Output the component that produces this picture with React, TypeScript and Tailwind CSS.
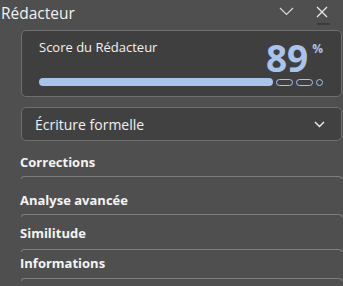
export default function App() {
  const sections = [
    { label: "Corrections", h: "h-[38px]", pt: "pt-[12px]" },
    { label: "Analyse avancée", h: "h-[38px]", pt: "pt-[12px]" },
    { label: "Similitude", h: "h-[35px]", pt: "pt-[7px]" },
    { label: "Informations", h: "h-[29px]", pt: "pt-[2px]" },
  ]

  return (
    <div className="w-[343px] h-[286px] overflow-hidden bg-[#4f4f4f] text-[#f2f2f2] font-['Open_Sans',sans-serif]">
      {/* titre */}
      <div className="flex items-center h-[30px] pl-[1px] pr-[13px]">
        <span className="text-[15.5px] leading-none -mt-[2px]">Rédacteur</span>
        <div className="ml-auto flex items-start gap-[20px]">
          <svg width="15" height="9" viewBox="0 0 15 9" className="mt-[1px]">
            <path d="M1 1 L7.5 7.5 L14 1" fill="none" stroke="#d8d8d8" strokeWidth="1.2" />
          </svg>
          <div className="flex flex-col items-center">
            <svg width="12" height="12" viewBox="0 0 12 12">
              <path d="M1 1 L11 11 M11 1 L1 11" fill="none" stroke="#e8e8e8" strokeWidth="1.3" />
            </svg>
            <div className="w-[13px] h-[2px] mt-[5px] ml-[3px] bg-[#3c3c3c]" />
          </div>
        </div>
      </div>

      {/* score */}
      <div className="ml-[21px] mr-[1px] h-[67px] rounded-[5px] border border-[#6f6f6f] bg-[#3f3f3f] pl-[17px] pr-[18px] pt-[5px]">
        <div className="flex items-start justify-between h-[42px]">
          <span className="text-[13px] leading-[18px] mt-[2px]">Score du Rédacteur</span>
          <div className="flex items-start text-[#a8c3ec]">
            <span className="text-[37px] font-bold leading-[37px] mt-[3px]">89</span>
            <span className="text-[12px] font-bold leading-none ml-[4px] mt-[7px]">%</span>
          </div>
        </div>
        <div className="flex items-center gap-[3px]">
          <div className="h-[8px] w-[234px] rounded-full bg-[#a8c3ec]" />
          <div className="h-[7px] w-[17px] rounded-full border-[1.5px] border-[#a8c3ec]" />
          <div className="h-[7px] w-[17px] rounded-full border-[1.5px] border-[#a8c3ec]" />
          <div className="h-[7px] w-[7px] rounded-full border-[1.5px] border-[#a8c3ec]" />
        </div>
      </div>

      {/* style */}
      <div className="ml-[21px] mr-[1px] mt-[10px] h-[34px] rounded-[5px] border border-[#6f6f6f] bg-[#414141] flex items-center pl-[13px] pr-[16px]">
        <span className="text-[14px]">Écriture formelle</span>
        <svg width="11" height="7" viewBox="0 0 11 7" className="ml-auto">
          <path d="M1 1 L5.5 5.5 L10 1" fill="none" stroke="#eeeeee" strokeWidth="1.4" />
        </svg>
      </div>

      {/* sections */}
      {sections.map((s) => (
        <div key={s.label} className={`${s.h} flex flex-col`}>
          <div className={`${s.pt} pl-[20px] text-[13px] font-bold leading-[18px] text-[#f4f4f4]`}>{s.label}</div>
          <div className="mt-auto ml-[21px] mr-[1px] h-[3px] rounded-t-[4px] border-t border-x border-[#7c7c7c]" />
        </div>
      ))}
    </div>
  )
}
